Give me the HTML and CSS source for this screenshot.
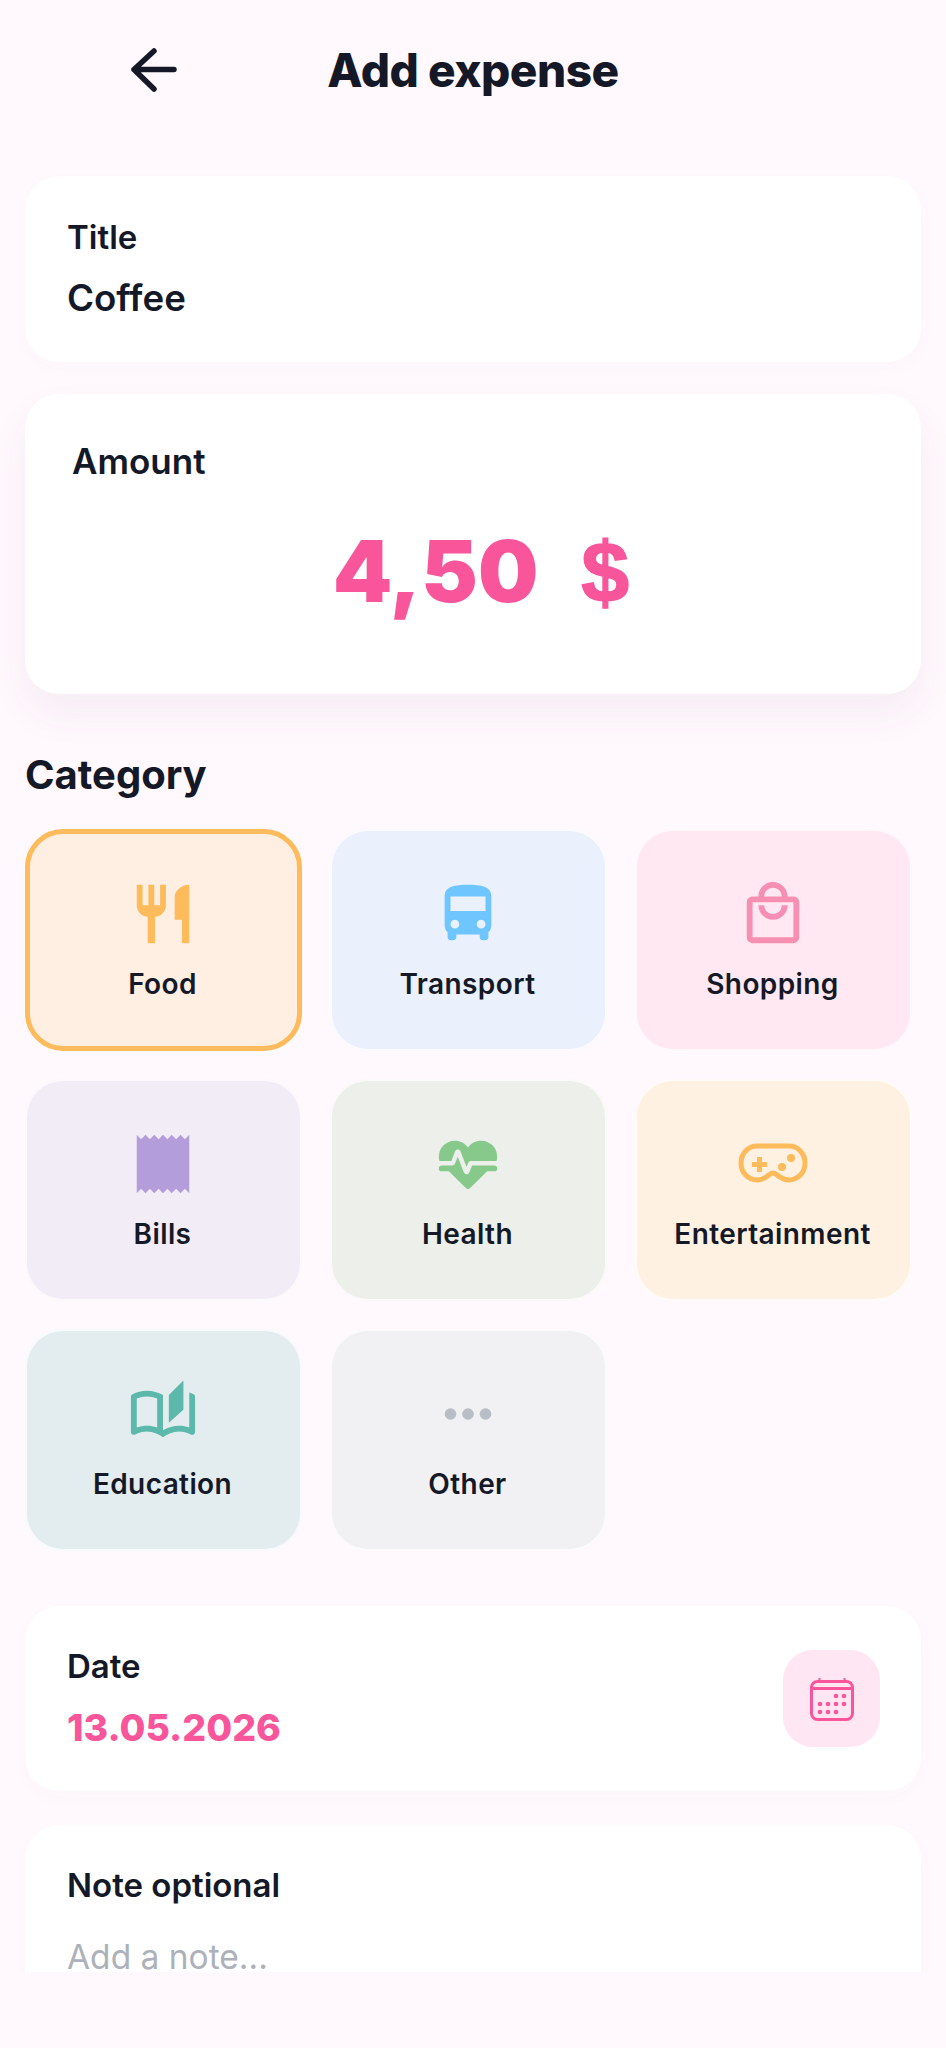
FILE: index.html
```html
<!DOCTYPE html>
<html lang="en">
<head>
  <meta charset="UTF-8">
  <title>Add expense</title>
  <link rel="stylesheet" href="styles.css">
</head>
<body>
  <div class="screen">
    <header class="top-bar">
      <button class="back-button" aria-label="Back">
        <svg width="46" height="44" viewBox="0 0 46 44"><path d="M23 3 3 21.500 23 41M3 21.500H43" fill="none" stroke="#141827" stroke-width="5.500" stroke-linecap="round" stroke-linejoin="round"/></svg>
      </button>
      <h1>Add expense</h1>
    </header>

    <section class="card title-card">
      <div class="field-label">Title</div>
      <div class="field-value">Coffee</div>
    </section>

    <section class="card amount-card">
      <div class="field-label">Amount</div>
      <div class="amount"><span>4,50</span><span class="currency">$</span></div>
    </section>

    <h2>Category</h2>
    <div class="categories">
      <div class="tile tile-food selected">
        <svg class="tile-icon" viewBox="0 0 24 24"><path d="M11 9H9V2H7v7H5V2H3v7c0 2.120 1.660 3.840 3.750 3.970V22h2.500v-9.030C11.340 12.840 13 11.120 13 9V2h-2v7zm5-3v8h2.500v8H21V2c-2.760 0-5 2.240-5 4z"/></svg>
        <span>Food</span>
      </div>
      <div class="tile tile-transport">
        <svg class="tile-icon" viewBox="0 0 24 24"><path d="M4 16c0 .88.39 1.670 1 2.220V20c0 .55.45 1 1 1h1c.55 0 1-.45 1-1v-1h8v1c0 .55.45 1 1 1h1c.55 0 1-.45 1-1v-1.780c.61-.55 1-1.340 1-2.220V6c0-3.500-3.580-4-8-4s-8 .5-8 4v10zm3.500 1c-.83 0-1.500-.67-1.500-1.500S6.670 14 7.500 14s1.500.67 1.500 1.500S8.330 17 7.500 17zm9 0c-.83 0-1.500-.67-1.500-1.500s.67-1.500 1.500-1.500 1.500.67 1.500 1.500-.67 1.500-1.500 1.500zm1.500-6H6V6h12v5z"/></svg>
        <span>Transport</span>
      </div>
      <div class="tile tile-shopping">
        <svg class="tile-icon" viewBox="0 0 24 24"><path d="M19 6h-2c0-2.760-2.240-5-5-5S7 3.240 7 6H5c-1.100 0-2 .9-2 2v12c0 1.100.9 2 2 2h14c1.100 0 2-.9 2-2V8c0-1.100-.9-2-2-2zm-7-3c1.660 0 3 1.340 3 3H9c0-1.660 1.340-3 3-3zm7 17H5V8h14v12zm-7-8c-1.660 0-3-1.340-3-3H7c0 2.760 2.240 5 5 5s5-2.240 5-5h-2c0 1.660-1.340 3-3 3z"/></svg>
        <span>Shopping</span>
      </div>
      <div class="tile tile-bills">
        <svg class="tile-icon" viewBox="0 0 24 24"><path d="M3 22l1.500-1.500L6 22l1.500-1.500L9 22l1.500-1.500L12 22l1.500-1.500L15 22l1.500-1.500L18 22l1.500-1.500L21 22V2l-1.500 1.500L18 2l-1.500 1.500L15 2l-1.500 1.500L12 2l-1.500 1.500L9 2 7.500 3.500 6 2 4.500 3.500 3 2v20z"/></svg>
        <span>Bills</span>
      </div>
      <div class="tile tile-health">
        <svg class="tile-icon" viewBox="0 0 24 24"><path d="M7.500 4A5.500 5.500 0 0 0 2 9.500C2 10 2.090 10.500 2.220 11H6.300L7.570 7.630C7.870 6.830 9.050 6.750 9.430 7.630L11.500 13L12.090 11.580C12.220 11.250 12.570 11 13 11H21.780C21.910 10.500 22 10 22 9.500A5.500 5.500 0 0 0 16.500 4C14.640 4 13 4.930 12 6.340C11 4.930 9.360 4 7.500 4ZM3 12.500A1 1 0 0 0 2 13.500A1 1 0 0 0 3 14.500H5.440L11 20C12 20.900 12 20.900 13 20L18.560 14.500H21A1 1 0 0 0 22 13.500A1 1 0 0 0 21 12.500H13.400L12.470 14.800C12.070 15.810 10.920 15.670 10.550 14.830L8.500 9.500L7.540 11.830C7.390 12.210 7.050 12.500 6.600 12.500H3Z"/></svg>
        <span>Health</span>
      </div>
      <div class="tile tile-fun">
        <svg class="tile-icon" viewBox="0 0 70 70">
          <path d="M19 17H51C60 17 67 24.500 67 34S60 51 51 51C46 51 42 48.500 38.500 45.500C36 43.500 34 43.500 31.500 45.500C28 48.500 24 51 19 51C10 51 3 43.500 3 34S10 17 19 17Z" fill="none" stroke="currentColor" stroke-width="5"/>
          <path d="M19 28h5v5h5v5h-5v5h-5v-5h-5v-5h5z"/>
          <circle cx="53" cy="29" r="4"/>
          <circle cx="44" cy="38" r="4"/>
        </svg>
        <span>Entertainment</span>
      </div>
      <div class="tile tile-education">
        <svg class="tile-icon" viewBox="0 0 24 24"><path d="M22.470 5.200C22 4.960 21.510 4.760 21 4.590v12.030C19.860 16.210 18.690 16 17.500 16c-1.900 0-3.780.54-5.500 1.580V5.480C10.380 4.550 8.510 4 6.500 4 4.710 4 3.020 4.440 1.530 5.200 1.200 5.360 1 5.710 1 6.080v12.080c0 .58.47.99 1 .99.16 0 .32-.04.48-.12C3.690 18.400 5.050 18 6.500 18c2.070 0 3.980.82 5.500 2 1.520-1.180 3.430-2 5.500-2 1.450 0 2.810.4 4.020 1.040.16.08.32.12.48.12.52 0 1-.41 1-.99V6.080c0-.37-.2-.72-.53-.88zM10 16.620C8.860 16.210 7.690 16 6.500 16s-2.360.21-3.500.62V6.710C4.110 6.240 5.280 6 6.500 6c1.200 0 2.390.25 3.500.72v9.900zM19 .5l-5 5V15l5-4.500V.5z"/></svg>
        <span>Education</span>
      </div>
      <div class="tile tile-other">
        <svg class="tile-icon" viewBox="0 0 24 24"><circle cx="6" cy="12" r="2"/><circle cx="12" cy="12" r="2"/><circle cx="18" cy="12" r="2"/></svg>
        <span>Other</span>
      </div>
    </div>

    <section class="card date-card">
      <div>
        <div class="field-label">Date</div>
        <div class="date-value">13.05.2026</div>
      </div>
      <div class="date-button">
        <svg width="44" height="44" viewBox="0 0 44 44">
          <rect x="1.500" y="4.500" width="41" height="38" rx="6" fill="none" stroke="#f8559b" stroke-width="3"/>
          <path d="M1.500 11.500h41" stroke="#f8559b" stroke-width="3"/>
          <path d="M9.500 1v5M34.500 1v5" stroke="#f8559b" stroke-width="2"/>
          <g fill="#f8559b">
            <circle cx="26" cy="19" r="2.300"/><circle cx="34" cy="19" r="2.300"/>
            <circle cx="10" cy="27" r="2.300"/><circle cx="18" cy="27" r="2.300"/><circle cx="26" cy="27" r="2.300"/><circle cx="34" cy="27" r="2.300"/>
            <circle cx="10" cy="35" r="2.300"/><circle cx="18" cy="35" r="2.300"/><circle cx="26" cy="35" r="2.300"/>
          </g>
        </svg>
      </div>
    </section>

    <section class="card note-card">
      <div class="field-label">Note optional</div>
      <div class="note-placeholder">Add a note...</div>
    </section>
  </div>
</body>
</html>
```

FILE: styles.css
```css
body {
  margin: 0;
  height: 2048px;
  background-color: #fff8fd;
  color: #141827;
  font-family: "Inter", "Liberation Sans", sans-serif;
}

.screen {
  height: 1972px;
  padding: 0 25px;
  box-sizing: border-box;
  overflow: hidden;
}

.top-bar {
  display: grid;
  grid-template-columns: 1fr auto 1fr;
  align-items: center;
  height: 140px;
  margin-bottom: 36px;
}

.back-button {
  justify-self: start;
  margin-left: 106px;
  padding: 0;
  border: none;
  background: none;
  line-height: 0;
}

h1 {
  margin: 0;
  font-size: 46px;
  font-weight: 800;
  letter-spacing: -0.5px;
}

.card {
  box-sizing: border-box;
  background-color: #fff;
  border-radius: 34px;
  box-shadow: 0 6px 20px rgba(120, 90, 110, 0.02);
}

.field-label {
  font-size: 33px;
  line-height: 40px;
  font-weight: 600;
}

.title-card {
  height: 186px;
  padding: 41px 42px;
}

.field-value {
  margin-top: 19px;
  font-size: 36.700px;
  line-height: 44px;
  font-weight: 600;
}

.amount-card {
  height: 300px;
  margin-top: 32px;
  padding: 47px 47px;
  box-shadow: 0 20px 40px rgba(90, 60, 80, 0.06);
}

.amount-card .field-label {
  font-size: 35px;
}

.amount {
  display: flex;
  justify-content: center;
  align-items: baseline;
  gap: 43px;
  margin-top: 39px;
  padding-left: 16px;
  color: #f8559b;
  font-size: 85px;
  line-height: 104px;
  font-weight: 900;
}

.currency {
  font-family: "Liberation Sans", sans-serif;
  font-size: 86px;
  font-weight: 700;
  -webkit-text-stroke: 1.5px #f8559b;
}

h2 {
  margin: 58px 0 31px;
  font-size: 40px;
  line-height: 46px;
  font-weight: 700;
}

.categories {
  display: grid;
  grid-template-columns: repeat(3, 277px);
  grid-auto-rows: 222px;
  gap: 28px;
}

.tile {
  display: flex;
  flex-direction: column;
  align-items: center;
  box-sizing: border-box;
  padding: 48px 2px 0 0;
  border: 2px solid rgba(255, 255, 255, 0.7);
  border-radius: 38px;
  font-size: 28px;
  line-height: 34px;
  font-weight: 600;
  letter-spacing: 0.4px;
}

.tile.selected {
  padding-top: 45px;
  border: 5px solid #fdbb5b;
}

.tile-icon {
  width: 70px;
  height: 70px;
  margin-bottom: 18px;
  fill: currentColor;
}

.tile span {
  color: #141827;
}

.tile-food { background-color: #ffefe2; color: #fdbb5b; }
.tile-transport { background-color: #eaf1fc; color: #6fc6ff; }
.tile-shopping { background-color: #ffe8f1; color: #f78fb3; }
.tile-bills { background-color: #f2ecf6; color: #b39ddb; }
.tile-health { background-color: #ecefea; color: #86c98a; }
.tile-fun { background-color: #fff1e2; color: #fdbb5b; }
.tile-education { background-color: #e3edef; color: #5cb8aa; }
.tile-other { background-color: #f1f1f4; color: #b9bdc5; }

.date-card {
  display: flex;
  justify-content: space-between;
  align-items: center;
  height: 185px;
  margin-top: 55px;
  padding: 0 41px 0 42px;
}

.date-value {
  margin-top: 19px;
  color: #f8559b;
  font-size: 37.500px;
  line-height: 46px;
  font-weight: 800;
}

.date-button {
  display: flex;
  align-items: center;
  justify-content: center;
  width: 97px;
  height: 97px;
  border-radius: 30px;
  background-color: #ffe6f2;
}

.note-card {
  height: 260px;
  margin-top: 34px;
  padding: 40px 42px;
}

.note-placeholder {
  margin-top: 30px;
  color: #adb1b9;
  font-size: 33.500px;
  line-height: 44px;
}
```
